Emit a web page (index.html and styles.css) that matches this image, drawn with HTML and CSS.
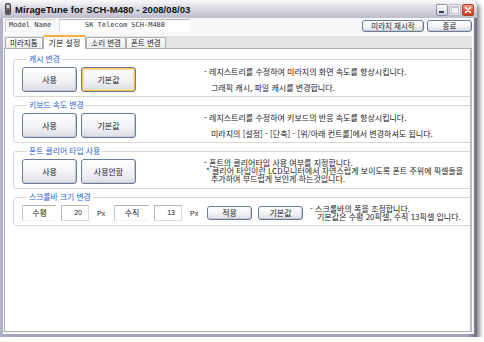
FILE: index.html
```html
<!DOCTYPE html>
<html lang="ko">
<head>
    <meta charset="UTF-8">
    <meta name="viewport" content="width=device-width, initial-scale=1.0">
    <title>MirageTune for SCH-M480</title>
    <link rel="stylesheet" href="styles.css">
</head>
<body>

    <div class="window">
        <div class="titlebar">
            <svg class="app-icon" width="8" height="12" viewBox="0 0 8 12">
                <rect x="1.5" y="0.5" width="5" height="11" rx="1.2" fill="#777" stroke="#2e2e2e" stroke-width="0.8"/>
                <rect x="2.6" y="1.8" width="2.8" height="3.2" fill="#d8dde4"/>
                <rect x="2.6" y="6.5" width="2.8" height="3.5" fill="#4a4a4a"/>
            </svg>
            <span class="title">MirageTune for SCH-M480 - 2008/08/03</span>
            <div class="caption">
                <span class="cap cap-min"><i></i></span>
                <span class="cap cap-max"><i></i></span>
                <span class="cap cap-close">
                    <svg width="12" height="12" viewBox="0 0 12 12">
                        <path d="M3 3 L9 9 M9 3 L3 9" stroke="#fff" stroke-width="1.8" stroke-linecap="round"/>
                    </svg>
                </span>
            </div>
        </div>

        <div class="client">
            <div class="toprow">
                <span class="static">Model Name</span>
                <span class="textbox">SK Telecom SCH-M480</span>
                <div class="top-buttons">
                    <button class="btn btn-small btn-restart">미라지 재시작</button>
                    <button class="btn btn-small btn-exit">종료</button>
                </div>
            </div>

            <div class="tabs">
                <span class="tab">미라지톰</span>
                <span class="tab active">기본 설정</span>
                <span class="tab">소리 변경</span>
                <span class="tab">폰트 변경</span>
            </div>

            <div class="panel">
                <fieldset class="group">
                    <legend>캐시 변경</legend>
                    <div class="group-body">
                        <div class="actions">
                            <button class="btn btn-big">사용</button>
                            <button class="btn btn-big focused">기본값</button>
                        </div>
                        <div class="desc">
                            <p>- 레지스트리를 수정하여 미라지의 화면 속도를 향상시킵니다.</p>
                            <p class="indent gap">그래픽 캐시, 파일 캐시를 변경합니다.</p>
                        </div>
                    </div>
                </fieldset>

                <fieldset class="group">
                    <legend>키보드 속도 변경</legend>
                    <div class="group-body">
                        <div class="actions">
                            <button class="btn btn-big">사용</button>
                            <button class="btn btn-big">기본값</button>
                        </div>
                        <div class="desc">
                            <p>- 레지스트리를 수정하여 키보드의 반응 속도를 향상시킵니다.</p>
                            <p class="indent gap">미라지의 [설정] - [단축] - [위/아래 컨트롤]에서 변경하셔도 됩니다.</p>
                        </div>
                    </div>
                </fieldset>

                <fieldset class="group">
                    <legend>폰트 클리어 타입 사용</legend>
                    <div class="group-body">
                        <div class="actions">
                            <button class="btn btn-big">사용</button>
                            <button class="btn btn-big">사용안함</button>
                        </div>
                        <div class="desc dense">
                            <p>- 폰트의 클리어타입 사용 여부를 지정합니다.</p>
                            <p class="star">* 클리어 타입이란 LCD모니터에서 자연스럽게 보이도록 폰트 주위에 픽셀들을</p>
                            <p class="indent">추가하여 부드럽게 보인게 하는것입니다.</p>
                        </div>
                    </div>
                </fieldset>

                <fieldset class="group">
                    <legend>스크롤바 크기 변경</legend>
                    <div class="scroll-row">
                        <span class="field-label">수평</span>
                        <span class="field-value">20</span>
                        <span class="unit">Px</span>
                        <span class="field-label wide">수직</span>
                        <span class="field-value">13</span>
                        <span class="unit">Px</span>
                        <button class="btn btn-mid">적용</button>
                        <button class="btn btn-mid">기본값</button>
                        <div class="desc dense scroll-desc">
                            <p>- 스크롤바의 폭을 조정합니다.</p>
                            <p class="indent">기본값은 수평 20픽셀, 수직 13픽셀 입니다.</p>
                        </div>
                    </div>
                </fieldset>
            </div>
        </div>
    </div>

</body>
</html>
```

FILE: styles.css
```css
body {
    margin: 0;
    background-color: #ffffff;
    font-family: "Noto Sans CJK KR", "Noto Sans", sans-serif;
    color: #222;
}

/* ventana estilo XP plateado */
.window {
    width: 477px;
    height: 337px;
    box-sizing: border-box;
    display: flex;
    flex-direction: column;
    background: linear-gradient(90deg, #b4b4c8, #a2a2ba 2%, #a2a2ba 98%, #6e6e88);
    border-radius: 6px 6px 0 0;
    box-shadow: 3px 3px 4px rgba(0, 0, 0, 0.45);
    padding: 0 3px 3px 3px;
}

.titlebar {
    height: 18px;
    margin: 0 -3px;
    padding: 0 3px 0 4px;
    display: flex;
    align-items: center;
    border-radius: 6px 6px 0 0;
    background: linear-gradient(#fbfbfd, #e4e4ec 30%, #d0d0dc 65%, #bcbccc);
}
.app-icon {
    margin-right: 3px;
}
.title {
    font-family: "Liberation Sans", Arial, sans-serif;
    font-weight: bold;
    font-size: 9.5px;
    color: #111;
    letter-spacing: 0.05px;
}
.caption {
    margin-left: auto;
    display: flex;
    gap: 1px;
    margin-top: 2px;
}
.cap {
    width: 12px;
    height: 12px;
    box-sizing: border-box;
    border: 1px solid #8d8da5;
    border-radius: 2px;
    background: linear-gradient(#ffffff, #e4e4ee 60%, #c8c8d8);
    position: relative;
    display: flex;
    align-items: center;
    justify-content: center;
}
.cap-min i {
    position: absolute;
    left: 2px;
    bottom: 2px;
    width: 5px;
    height: 2px;
    background: #3c3c50;
}
.cap-max {
    border-color: #b6b6c6;
    background: linear-gradient(#f8f8fb, #eaeaf0);
}
.cap-max i {
    width: 6px;
    height: 5px;
    border: 1px solid #c4c4d2;
    border-top-width: 2px;
}
.cap-close {
    border-color: #a8412a;
    background: linear-gradient(#f39c82, #e05a3a 55%, #c83c20);
}

.client {
    flex: 1;
    display: flex;
    flex-direction: column;
    background-color: #f7f7f7;
    padding: 1px 2px 2px 1px;
}

.toprow {
    display: flex;
    align-items: center;
    height: 13px;
    padding-left: 1px;
}
.static {
    width: 50px;
    height: 13px;
    box-sizing: border-box;
    border: 1px solid #c8c8c8;
    border-right-color: #f0f0f0;
    border-bottom-color: #f0f0f0;
    background: #fafafa;
    font-family: "DejaVu Sans Mono", monospace;
    font-size: 7px;
    line-height: 11px;
    padding-left: 3px;
    color: #333;
}
.textbox {
    width: 131px;
    height: 13px;
    box-sizing: border-box;
    margin-left: 4px;
    border-top: 1px solid #b8b8b8;
    border-left: 1px solid #d8d8d8;
    background: #ffffff;
    font-family: "DejaVu Sans Mono", monospace;
    font-size: 7px;
    line-height: 11px;
    text-align: center;
    color: #333;
}
.top-buttons {
    margin-left: auto;
    display: flex;
    gap: 3px;
    margin-top: 1px;
}

.btn {
    box-sizing: border-box;
    padding: 0;
    border: 1px solid #6c7b96;
    border-radius: 3px;
    background: linear-gradient(#ffffff, #f2f2f6 55%, #dcdce6);
    font-family: "Noto Sans CJK KR", sans-serif;
    font-size: 7.5px;
    color: #222;
    box-shadow: inset -1px -1px 0 #c8c8d4;
}
.btn-small {
    height: 12px;
    line-height: 10px;
}
.btn-restart {
    width: 62px;
}
.btn-exit {
    width: 45px;
}
.btn-big {
    width: 55px;
    height: 25px;
    font-size: 8px;
}
.btn-big.focused {
    box-shadow: inset 0 0 0 1px #f6c35a, inset 0 0 0 2px #fbe0a8;
}
.btn-mid {
    width: 45px;
    height: 14px;
    line-height: 12px;
    font-size: 8px;
}

.tabs {
    display: flex;
    align-items: flex-end;
    height: 12px;
    margin-top: 4px;
    padding-left: 1px;
    background: #e4e4e4;
    position: relative;
    z-index: 1;
}
.tab {
    height: 11px;
    box-sizing: border-box;
    border: 1px solid #a8aeb2;
    border-bottom: none;
    border-radius: 2px 2px 0 0;
    background: linear-gradient(#ffffff, #ececec);
    font-size: 7.5px;
    line-height: 10px;
    padding: 0 4px;
    color: #222;
}
.tab.active {
    height: 14px;
    margin-bottom: -1px;
    background: #ffffff;
    border-top: 2px solid #f4b040;
    line-height: 11px;
    padding: 0 5px;
    font-size: 8px;
}

.panel {
    flex: 1;
    background: #ffffff;
    border: 1px solid #a8aeb2;
    border-right: 2px solid #b8bcc0;
    overflow: hidden;
    padding: 5px 0 0 8px;
}

.group {
    margin: 0 -6px 3px 0;
    padding: 3px 0 4px 8px;
    border: 1px solid #d8d8d0;
    border-radius: 3px;
    min-width: 0;
}
.group legend {
    padding: 0 2px;
    margin-left: 5px;
    font-size: 7.8px;
    line-height: 10px;
    color: #2a62d8;
}
.group-body {
    display: flex;
    align-items: flex-start;
}
.actions {
    width: 182px;
    display: flex;
    gap: 4px;
    flex-shrink: 0;
}

.desc {
    font-size: 8px;
    line-height: 9px;
    color: #1a1a1a;
    white-space: nowrap;
    padding-top: 0;
}
.desc p {
    margin: 0;
}
.desc .gap {
    margin-top: 7px;
}
.desc .indent {
    padding-left: 7px;
}
.desc .star {
    padding-left: 2px;
}
.desc.dense {
    line-height: 8px;
    padding-top: 0;
}

.scroll-row {
    display: flex;
    align-items: center;
    height: 16px;
}
.field-label {
    width: 34px;
    height: 16px;
    box-sizing: border-box;
    border-top: 1px solid #b0b0b0;
    border-left: 1px solid #c8c8c8;
    border-bottom: 1px solid #f0f0f0;
    font-size: 8px;
    line-height: 14px;
    text-align: center;
}
.field-label.wide {
    width: 35px;
}
.field-value {
    width: 28px;
    height: 16px;
    margin-left: 5px;
    box-sizing: border-box;
    border: 1px solid #b8b8b8;
    border-right-color: #dcdcdc;
    border-bottom-color: #dcdcdc;
    font-family: "Liberation Sans", Arial, sans-serif;
    font-size: 7px;
    line-height: 14px;
    text-align: right;
    padding-right: 6px;
}
.unit {
    font-family: "Liberation Sans", Arial, sans-serif;
    font-size: 7px;
    margin-left: 8px;
    width: 17px;
}
.btn-mid + .btn-mid {
    margin-left: 6px;
}
.scroll-desc {
    margin-left: 7px;
    padding-top: 0;
}
```
